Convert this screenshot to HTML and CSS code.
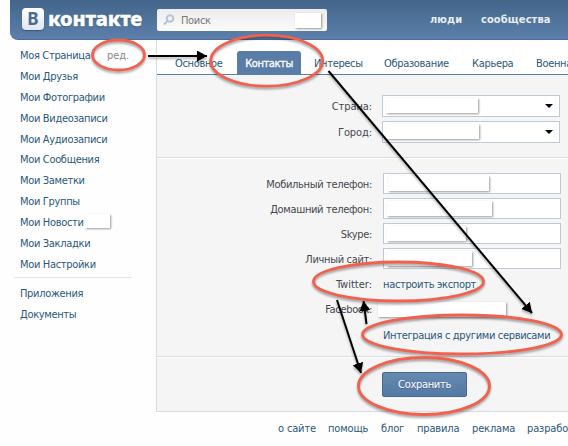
FILE: index.html
```html
<!DOCTYPE html>
<html lang="ru">
<head>
<meta charset="utf-8">
<title>ВКонтакте</title>
<link rel="stylesheet" href="styles.css">
</head>
<body>
<header class="header">
  <div class="logo"><span class="logo-mark">В</span><span class="logo-text">контакте</span></div>
  <div class="search">
    <svg class="search-icon" width="12" height="12" viewBox="0 0 12 12"><circle cx="7" cy="4.5" r="3.3"/><path d="M4.5 7 1 10.5"/></svg>
    <span>Поиск</span><i class="mask search-mask"></i>
  </div>
  <nav class="topnav"><a class="people">люди</a><a class="communities">сообщества</a></nav>
</header>
<div class="layout">
  <nav class="sidebar">
    <div class="item"><a class="mypage">Моя Страница</a><a class="edit">ред.</a></div>
    <div class="item"><a>Мои Друзья</a></div>
    <div class="item"><a>Мои Фотографии</a></div>
    <div class="item"><a>Мои Видеозаписи</a></div>
    <div class="item"><a>Мои Аудиозаписи</a></div>
    <div class="item"><a>Мои Сообщения</a></div>
    <div class="item"><a>Мои Заметки</a></div>
    <div class="item"><a>Мои Группы</a></div>
    <div class="item"><a class="news">Мои Новости</a><i class="mask news-mask"></i></div>
    <div class="item"><a>Мои Закладки</a></div>
    <div class="item"><a>Мои Настройки</a></div>
    <hr class="divider">
    <div class="item"><a>Приложения</a></div>
    <div class="item"><a>Документы</a></div>
  </nav>
  <div class="column">
    <main class="content">
      <nav class="tabs">
        <a class="tab t1">Основное</a><a class="tab active">Контакты</a><a class="tab t3">Интересы</a><a class="tab t4">Образование</a><a class="tab t5">Карьера</a><a class="tab t6">Военная</a>
      </nav>
      <section class="place">
        <div class="row"><label>Страна:</label><div class="select"><i class="mask m1"></i><i class="caret"></i></div></div>
        <div class="row"><label>Город:</label><div class="select"><i class="mask m2"></i><i class="caret"></i></div></div>
      </section>
      <section class="contacts">
        <div class="row"><label>Мобильный телефон:</label><div class="input"><i class="mask m3"></i></div></div>
        <div class="row"><label>Домашний телефон:</label><div class="input"><i class="mask m4"></i></div></div>
        <div class="row"><label>Skype:</label><div class="input"><i class="mask m5"></i></div></div>
        <div class="row"><label>Личный сайт:</label><div class="input"><i class="mask m6"></i></div></div>
        <div class="row"><label class="latin">Twitter:</label><a class="export">настроить экспорт</a></div>
        <div class="row"><label>Facebook:</label><i class="mask m7"></i></div>
        <div class="row"><label></label><a class="integration">Интеграция с другими сервисами</a></div>
      </section>
      <section class="actions"><button class="save">Сохранить</button></section>
    </main>
    <footer class="footer"><a class="f1">о сайте</a><a class="f2">помощь</a><a class="f3">блог</a><a class="f4">правила</a><a class="f5">реклама</a><a class="f6">разрабо</a></footer>
  </div>
</div>
<svg class="annotations" width="568" height="446" viewBox="0 0 568 446">
  <defs>
    <marker id="head" viewBox="0 0 10 10" refX="10" refY="5" markerWidth="10" markerHeight="11" preserveAspectRatio="none" markerUnits="userSpaceOnUse" orient="auto"><path d="M0 0 10 5 0 10z"/></marker>
  </defs>
  <g class="arrows">
    <path d="M148 56H207"/>
    <path d="M328.5 71 532 313"/>
    <path d="M337 300 361 373"/>
    <path d="M366.500 324 363.500 301"/>
  </g>
  <g class="rings">
    <ellipse cx="118.500" cy="55" rx="26" ry="15"/>
    <ellipse cx="266.700" cy="60.700" rx="56" ry="25.500"/>
    <ellipse cx="398.500" cy="281.500" rx="85" ry="19.500"/>
    <ellipse cx="462" cy="334.500" rx="99.500" ry="19.500"/>
    <ellipse cx="424" cy="386" rx="65.500" ry="28.500"/>
  </g>
</svg>
</body>
</html>
```
FILE: styles.css
```css
* { box-sizing: border-box; }
body { margin: 0; width: 568px; height: 446px; overflow: hidden; position: relative; background: #fefefe; color: #45484d; font: 11px/15px "DejaVu Sans Condensed", "Noto Sans", sans-serif; letter-spacing: -.33px; }
a { color: #2b587a; white-space: nowrap; }
.header { display: flex; align-items: flex-start; height: 40px; margin-left: 10px; padding-left: 12px; border-bottom: 1px solid #4a6c95; border-radius: 0 0 0 8px; background: linear-gradient(#43658a, #5c80ab); }
.logo { display: flex; width: 135px; padding-top: 8px; letter-spacing: 0; }
.logo-mark { width: 22px; height: 22px; margin-right: 4px; border-radius: 4px; background: linear-gradient(#fff, #e1e7ee); color: #486c94; font: bold 17px/22px "Noto Sans", sans-serif; text-align: center; box-shadow: 0 1px 1px #365679; }
.logo-text { color: #fff; font: 800 20px/22px "Noto Sans", sans-serif; letter-spacing: -.2px; text-shadow: 0 1px 1px #365679; -webkit-text-stroke: .4px #fff; }
.search { display: flex; align-items: center; width: 170px; height: 22px; margin-top: 9px; padding-left: 6px; border-radius: 2px; background: linear-gradient(#ececec, #fbfbfb); color: #777; }
.search-icon { margin-right: 6px; fill: none; stroke: #b5c3d4; stroke-width: 2; }
.search-mask { width: 26px; height: 15px; margin-left: auto; margin-right: 6px; }
.mask { display: block; flex: none; background: #fff; box-shadow: 1px 1px 2px rgba(0,0,0,.4); }
.topnav { display: flex; padding-top: 12px; letter-spacing: .1px; }
.topnav a { color: #e6edf5; font-weight: bold; }
.people { width: 51px; margin-left: 103px; }
.layout { display: flex; height: 406px; }
.sidebar { width: 156px; padding: 5px 0 0 20px; }
.item { display: flex; align-items: center; height: 20.9px; }
.mypage { width: 87px; }
.edit { color: #888; letter-spacing: -.1px; }
.news { width: 65px; }
.news-mask { width: 25px; height: 14px; margin-bottom: 3px; }
.divider { width: 118px; margin: 2px 0 5px -6px; border: 0; border-top: 1px solid #e3e6e9; }
.column { width: 412px; overflow: hidden; }
.content { height: 372px; border-left: 1px solid #d5dee6; border-bottom: 1px solid #d5dce4; background: #f5f5f5; }
.tabs { display: flex; height: 35px; padding-top: 11px; border-bottom: 1px solid #5a7fac; background: #fff; }
.tab { flex: none; height: 24px; line-height: 26px; }
.t1 { width: 62px; margin-left: 18px; }
.active { width: 64px; border-radius: 3px 3px 0 0; background: #5a7da7; color: #fff; text-align: center; letter-spacing: -.4px; -webkit-text-stroke: .3px #fff; }
.t3 { width: 70px; margin-left: 13px; }
.t4 { width: 88px; }
.t5 { width: 64px; }
.row { display: flex; align-items: center; }
.row label { width: 215px; margin-right: 11px; text-align: right; white-space: nowrap; }
.latin { letter-spacing: 0; }
.place { height: 83px; padding-top: 20px; border-bottom: 1px solid #dadddf; }
.place .row { height: 22px; margin-bottom: 4px; }
.place .row label { margin-right: 10px; letter-spacing: -.1px; }
.select { display: flex; align-items: center; width: 178px; height: 22px; padding: 0 6px 0 3px; border: 1px solid #c0cad5; background: #fff; }
.select .mask { position: relative; top: -1px; }
.caret { margin-left: auto; border: 4px solid transparent; border-top-color: #000; border-bottom: 0; }
.input { width: 178px; height: 21px; padding: 2px 3px; border: 1px solid #c0cad5; background: #fff; }
.contacts { height: 199px; padding-top: 13px; border-top: 1px solid #fff; border-bottom: 1px solid #dadddf; }
.contacts .row { height: 25px; }
.contacts .row .input { margin-bottom: 2px; }
.m1 { width: 92px; height: 15px; }
.m2 { width: 93px; height: 15px; }
.m3 { width: 101px; height: 15px; margin-left: 1px; }
.m4 { width: 105px; height: 15px; }
.m5 { width: 79px; height: 15px; }
.m6 { width: 85px; height: 15px; }
.m7 { width: 128px; height: 15px; margin-left: -5px; }
.integration { padding-top: 1px; }
.actions { height: 54px; padding: 14px 0 0 225px; border-top: 1px solid #fff; }
.save { display: block; width: 85px; height: 25px; padding: 0 0 1px; border: 1px solid #45688e; border-radius: 2px; background: linear-gradient(#6789b1, #5379a5); color: #fff; font: 11px/21px "DejaVu Sans Condensed", sans-serif; letter-spacing: -.3px; text-shadow: 0 1px 0 #45688e; }
.footer { display: flex; padding: 9px 0 0 122px; letter-spacing: -.15px; }
.footer a { flex: none; }
.f1 { width: 50px; }
.f2 { width: 53px; }
.f3 { width: 36px; }
.f4 { width: 55px; }
.f5 { width: 55px; }
.annotations { position: absolute; left: 0; top: 0; }
.arrows { filter: drop-shadow(0 2px 1px rgba(0,0,0,.3)); }
.arrows > path { fill: none; stroke: #000; stroke-width: 2; marker-end: url(#head); }
.rings { fill: none; stroke: #f2604e; stroke-width: 2.8; filter: drop-shadow(0 2px 1px rgba(0,0,0,.35)); }
```
